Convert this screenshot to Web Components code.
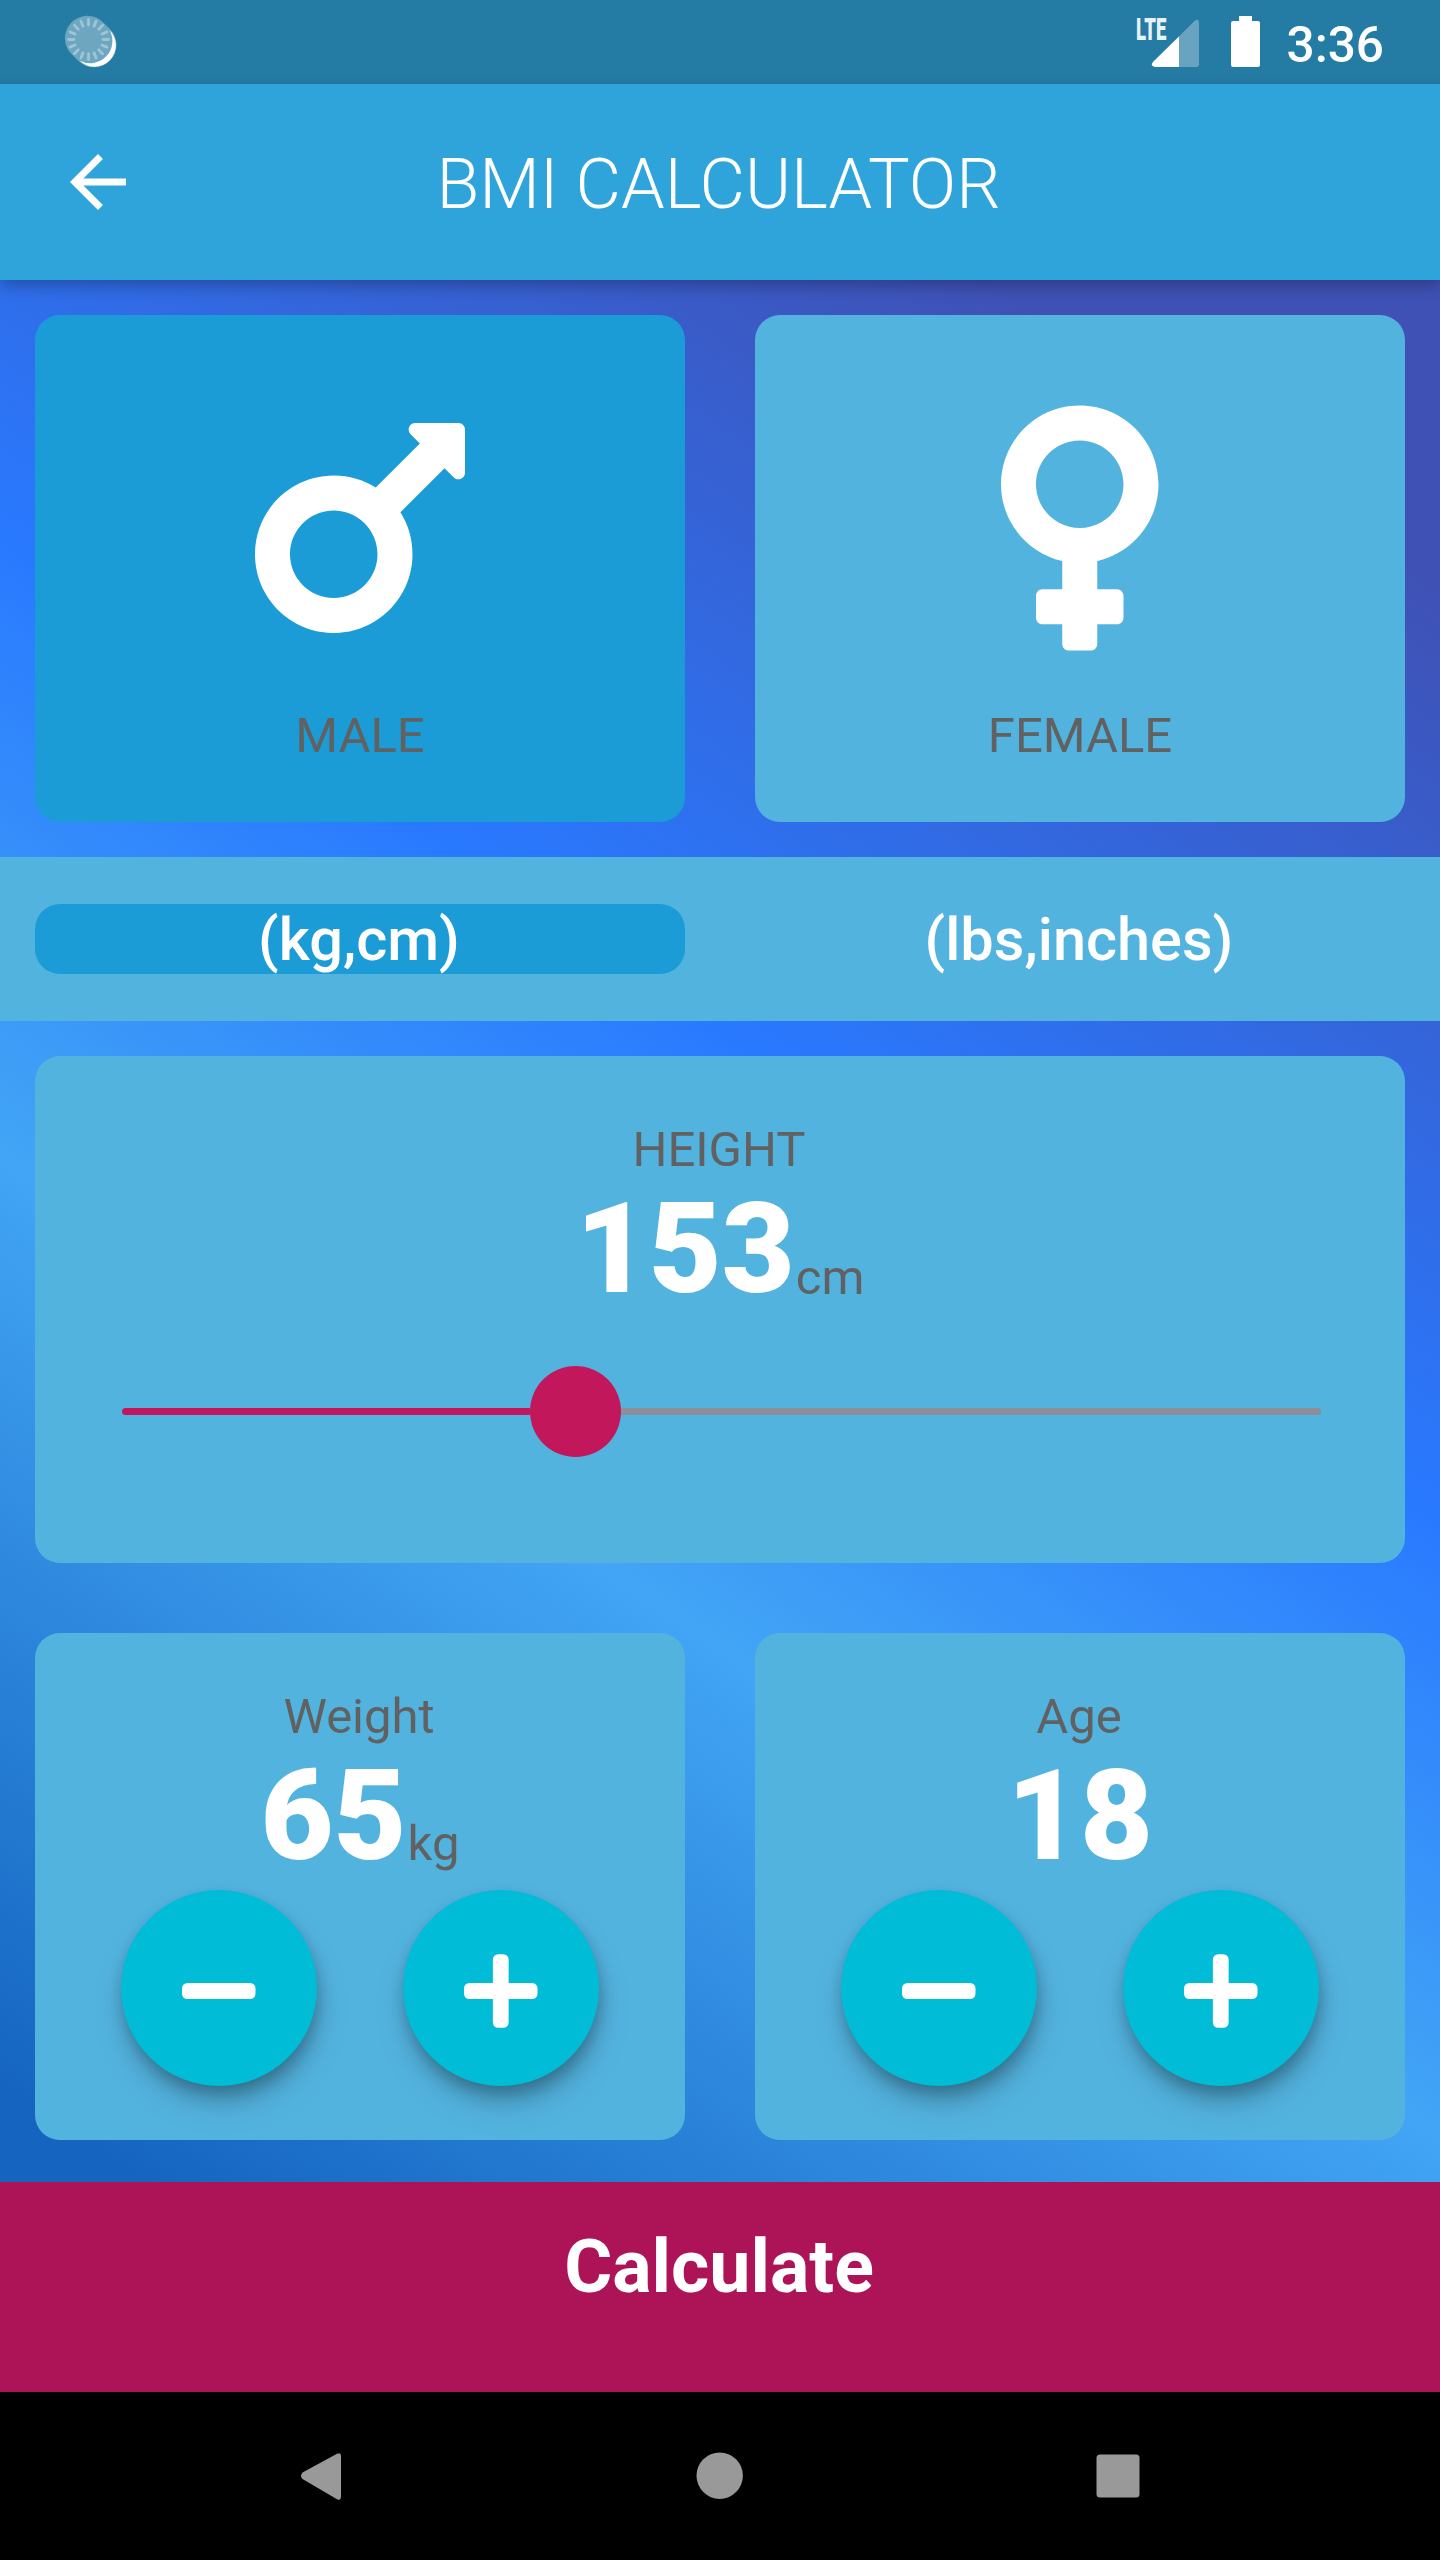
<!DOCTYPE html>
<html lang="en">
<head>
<meta charset="utf-8">
<title>BMI Calculator</title>
<style>
html,body{margin:0;padding:0}
body{width:1440px;height:2560px;overflow:hidden;background:#000;font-family:Roboto,"Noto Sans",sans-serif}
</style>
</head>
<body>
<bmi-app></bmi-app>
<script>
const define = (name, html) => customElements.define(name, class extends HTMLElement {
  constructor() {
    super();
    const tpl = document.createElement('template');
    tpl.innerHTML = html;
    this.attachShadow({ mode: 'open' }).append(tpl.content.cloneNode(true));
  }
});

let ticks = '';
for (let i = 0; i < 16; i++) ticks += `<path d="M88.5 25v-5.500" transform="rotate(${i * 22.5} 88.5 39.5)"/>`;

define('status-bar', `
<style>
:host{display:flex;height:84px;background:#247ba4;color:#fff;align-items:flex-start}
.sync{width:130px;height:84px}
.grow{flex:1}
.lte{font-size:32px;line-height:32px;font-weight:900;width:33px;margin-top:13px;color:#e9f2f6}
.lte span{display:inline-block;transform:scaleX(.58);transform-origin:0 0}
.signal{width:50px;height:84px;margin-left:-18px}
.battery{width:29px;height:51px;margin:16px 0 0 30px}
.time{font-size:49.500px;font-weight:500;line-height:58px;width:96px;margin:16px 57.500px 0 27px;white-space:nowrap}
svg{display:block}
</style>
<svg class="sync" viewBox="0 0 130 84">
<path d="M73 55.6 A22.5 22.5 0 1 1 104.6 23.8 L109.4 28.4 A22.5 22.5 0 1 1 77.6 60.2 Z" fill="#6ea6c0"/>
<path d="M109.5 30 A20.8 20.8 0 1 1 79.5 60.6 A22.3 22.3 0 0 0 109.5 30Z" fill="#fff"/>
<g stroke="#9cc6d8" stroke-width="2.8" stroke-linecap="round">${ticks}</g>
</svg>
<div class="grow"></div>
<div class="lte"><span>LTE</span></div>
<svg class="signal" viewBox="1151 0 50 84"><path d="M1155 67h41.500a2.500 2.500 0 0 0 2.500-2.500V22.500q0-4-4-2l-42 41.500q-3 4 2 5z" fill="#68a3bf"/><path d="M1155 67h24V36.500l-26 25.500q-3 4 2 5z" fill="#fff"/></svg>
<svg class="battery" viewBox="0 0 29 51"><path d="M8 0h13v5h6a2 2 0 0 1 2 2v42a2 2 0 0 1-2 2H2a2 2 0 0 1-2-2V7a2 2 0 0 1 2-2h6z" fill="#fff"/></svg>
<div class="time">3:36</div>`);

define('app-bar', `
<style>
:host{display:grid;grid-template-columns:1fr auto 1fr;align-items:center;height:196px;background:#2fa4da;color:#fff;box-shadow:0 6px 14px rgba(0,0,0,.26);position:relative;z-index:1}
svg{width:84px;height:84px;margin-left:56px;display:block}
.title{font-size:70px;line-height:82px;font-weight:300;padding:4px 3px 0 0}
</style>
<svg viewBox="0 0 24 24"><path fill="#fff" d="M20 11H7.830l5.590-5.590L12 4l-8 8 8 8 1.410-1.410L7.830 13H20v-2z"/></svg>
<div class="title"><slot></slot></div>`);

define('info-card', `
<style>
:host{display:flex;flex-direction:column;align-items:center;box-sizing:border-box;flex:1;height:507px;border-radius:25px;background:#53b3df;color:#616161}
:host([selected]){background:#1c9cd7}
</style><slot></slot>`);

define('gender-choice', `
<style>
:host{display:flex;flex-direction:column;align-items:center;padding-top:73px;font-size:49px;line-height:58px}
::slotted(svg){height:280px;display:block;margin-bottom:39px}
</style><slot name="icon"></slot><slot></slot>`);

define('unit-tab', `
<style>
:host{flex:1;height:70px;line-height:72px;font-size:59.500px;font-weight:500;color:#fff;text-align:center;border-radius:25px;display:block;box-sizing:border-box;padding-right:2px}
:host([selected]){background:#1c9cd7}
</style><slot></slot>`);

define('value-readout', `
<style>
:host{display:flex;flex-direction:column;align-items:center;color:#616161}
.label{font-size:49px;line-height:58px;padding-right:2px}
.row{display:flex;align-items:flex-end;height:148px;margin-top:-4px}
.value{font-size:126px;line-height:148px;font-weight:900;color:#fff}
.unit{font-size:49px;line-height:58px;padding-bottom:var(--unit-drop,16px);padding-left:var(--unit-gap,0)}
</style>
<div class="label"><slot name="label"></slot></div>
<div class="row"><div class="value"><slot></slot></div><div class="unit"><slot name="unit"></slot></div></div>`);

define('height-slider', `
<style>
:host{display:flex;align-items:center;width:1199px;height:91px}
.on{width:408px;height:7px;border-radius:4px 0 0 4px;background:#c2185b}
.thumb{width:91px;height:91px;border-radius:50%;background:#c2185b}
.off{flex:1;height:7px;border-radius:0 4px 4px 0;background:#8d8e98}
</style>
<div class="on"></div><div class="thumb"></div><div class="off"></div>`);

define('round-button', `
<style>
:host{display:flex;align-items:center;justify-content:center;width:196px;height:196px;border-radius:50%;background:#00bcd7;box-shadow:2px 13px 20px -3px rgba(0,0,0,.28),2px 20px 34px rgba(0,0,0,.11),1px 4px 12px rgba(0,0,0,.07)}
svg{width:73.500px;height:84px;margin-top:6px;display:block}
.v{display:none}
:host([kind=plus]) .v{display:inline}
</style>
<svg viewBox="0 0 448 512" fill="#fff"><rect y="207" width="448" height="98" rx="32"/><rect class="v" x="176" y="32" width="96" height="448" rx="32"/></svg>`);

define('step-buttons', `
<style>:host{display:flex;justify-content:space-evenly;width:650px}</style>
<round-button kind="minus"></round-button><round-button kind="plus"></round-button>`);

define('calculate-button', `
<style>
:host{display:flex;justify-content:center;box-sizing:border-box;height:210px;padding:42px 2px 0 0;background:#ad1457;color:#fff;font-size:73.500px;line-height:86px;font-weight:700;margin-top:auto}
</style><slot></slot>`);

define('nav-bar', `
<style>
:host{display:block;height:168px;background:#000}
svg{display:block}
</style>
<svg width="1440" height="168" viewBox="0 0 1440 168" fill="#999">
<path d="M302.500 80.500L337 61.800q4-1.800 4 2.200v41q0 4-4 2.200L302.500 87q-3-3.200 0-6.500z"/>
<circle cx="719.700" cy="83.700" r="23.200"/><rect x="1096.500" y="62.500" width="43" height="43" rx="3.500"/></svg>`);

define('bmi-app', `
<style>
:host{display:flex;flex-direction:column;width:1440px;height:2560px}
main{height:2112px;display:flex;flex-direction:column;background:linear-gradient(214.287deg,#3f51b5 10%,#2979ff 40%,#42a5f5 60%,#1565c0 90%)}
.row{display:flex;gap:70px;padding:35px;height:507px}
.units{display:flex;gap:70px;height:164px;box-sizing:border-box;padding:47px 35px 0;background:#53b3df}
.h value-readout{margin-top:65px;--unit-gap:1px}
.h height-slider{margin:43px 0 0 3px}
.s value-readout{margin-top:55px;--unit-drop:17px}
.s value-readout:has([slot=unit]){--unit-gap:1px}
</style>
<status-bar></status-bar>
<app-bar>BMI CALCULATOR</app-bar>
<main>
<div class="row">
<info-card selected><gender-choice><svg slot="icon" width="210" height="280" viewBox="0 0 384 512" fill="#fff"><path d="M372 64h-79c-10.700 0-16 12.900-8.500 20.500l16.900 16.900-80.700 80.700C198.500 167.900 172.200 160 144 160 64.500 160 0 224.500 0 304s64.500 144 144 144 144-64.500 144-144c0-28.200-7.900-54.500-22.100-76.700l80.700-80.700 16.900 16.900c7.600 7.600 20.500 2.200 20.500-8.500V76c0-6.600-5.400-12-12-12zM144 384c-44.100 0-80-35.900-80-80s35.900-80 80-80 80 35.900 80 80-35.900 80-80 80z"/></svg>MALE</gender-choice></info-card>
<info-card><gender-choice><svg slot="icon" width="157.500" height="280" viewBox="0 0 288 512" fill="#fff"><path d="M288 176c0-79.500-64.500-144-144-144S0 96.500 0 176c0 68.500 47.900 125.900 112 140.400V368H76c-6.600 0-12 5.400-12 12v40c0 6.600 5.400 12 12 12h36v36c0 6.600 5.400 12 12 12h40c6.600 0 12-5.400 12-12v-36h36c6.600 0 12-5.400 12-12v-40c0-6.600-5.400-12-12-12h-36v-51.600c64.100-14.600 112-71.900 112-140.400zm-224 0c0-44.100 35.900-80 80-80s80 35.900 80 80-35.900 80-80 80-80-35.900-80-80z"/></svg>FEMALE</gender-choice></info-card>
</div>
<div class="units"><unit-tab selected>(kg,cm)</unit-tab><unit-tab>(lbs,inches)</unit-tab></div>
<div class="row h"><info-card>
<value-readout><span slot="label">HEIGHT</span>153<span slot="unit">cm</span></value-readout>
<height-slider></height-slider>
</info-card></div>
<div class="row s">
<info-card><value-readout><span slot="label">Weight</span>65<span slot="unit">kg</span></value-readout><step-buttons></step-buttons></info-card>
<info-card><value-readout><span slot="label">Age</span>18</value-readout><step-buttons></step-buttons></info-card>
</div>
<calculate-button>Calculate</calculate-button>
</main>
<nav-bar></nav-bar>`);
</script>
</body>
</html>
